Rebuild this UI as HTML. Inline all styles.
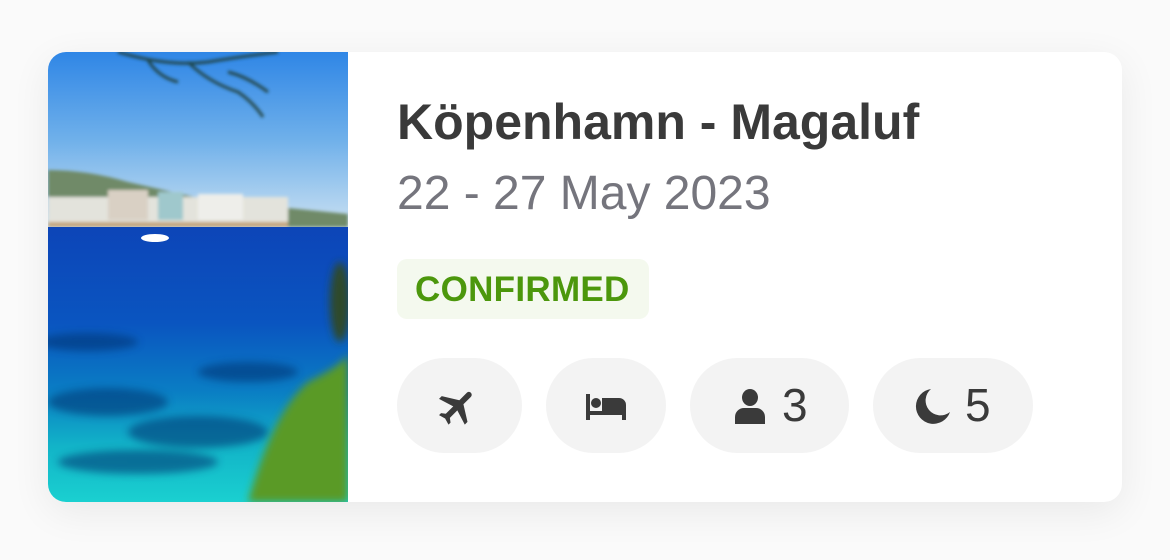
<!DOCTYPE html>
<html><head><meta charset="utf-8"><style>
html,body{margin:0;padding:0;width:1170px;height:560px;background:#fafafa;overflow:hidden;font-family:"Liberation Sans",sans-serif;}
.card{position:absolute;left:48px;top:52px;width:1074px;height:450px;background:#fff;border-radius:18px;box-shadow:0 10px 40px rgba(0,0,0,0.07);overflow:hidden;}
.img{position:absolute;left:0;top:0;width:300px;height:450px;overflow:hidden;}
.t{position:absolute;white-space:nowrap;}
.title{left:349px;top:40px;font-size:50px;line-height:60px;font-weight:bold;color:#3a3a3a;}
.date{left:349px;top:112px;font-size:48px;line-height:60px;color:#75757d;}
.badge{position:absolute;left:349px;top:207px;width:252px;height:60px;border-radius:10px;background:#f4f9ee;}
.badge span{position:absolute;left:18px;top:11px;font-size:35px;line-height:40px;font-weight:bold;color:#4c970c;letter-spacing:0.3px;}
.pill{position:absolute;top:306px;height:95px;border-radius:48px;background:#f3f3f3;}
.pill svg{position:absolute;}
.pill .n{position:absolute;font-size:46px;line-height:50px;color:#3a3a3a;top:22px;}
</style></head><body>
<div class="card">
 <div class="img">
  <svg width="300" height="450" viewBox="0 0 300 450">
   <defs>
    <linearGradient id="sky" x1="0" y1="0" x2="0" y2="1">
     <stop offset="0" stop-color="#2f86e6"/><stop offset="0.5" stop-color="#6fb0ea"/><stop offset="1" stop-color="#c9e0f2"/>
    </linearGradient>
    <linearGradient id="sea" x1="0" y1="0" x2="0" y2="1">
     <stop offset="0" stop-color="#0d45b8"/><stop offset="0.35" stop-color="#0a55c0"/><stop offset="0.6" stop-color="#0a7ec4"/><stop offset="0.8" stop-color="#12b4c8"/><stop offset="1" stop-color="#1ad0d0"/>
    </linearGradient>
    <filter id="b"><feGaussianBlur stdDeviation="4"/></filter>
    <filter id="b2"><feGaussianBlur stdDeviation="1.5"/></filter>
   </defs>
   <rect width="300" height="175" fill="url(#sky)"/>
   <g filter="url(#b2)">
   <path d="M0 118 Q40 118 80 130 L160 148 L300 162 L300 175 L0 175Z" fill="#6f8a68"/>
   <rect x="0" y="145" width="240" height="25" fill="#e3e3dc"/>
   <rect x="60" y="138" width="40" height="30" fill="#d9d0c4"/>
   <rect x="110" y="140" width="25" height="28" fill="#9fc8cc"/>
   <rect x="150" y="142" width="45" height="26" fill="#eeeeea"/>
   <rect x="0" y="170" width="240" height="5" fill="#c4a57a"/>
   </g>
   <rect x="0" y="175" width="300" height="275" fill="url(#sea)"/>
   <g filter="url(#b)" opacity="0.55" fill="#06306f">
    <ellipse cx="60" cy="350" rx="60" ry="14"/><ellipse cx="150" cy="380" rx="70" ry="16"/><ellipse cx="90" cy="410" rx="80" ry="12"/><ellipse cx="200" cy="320" rx="50" ry="10"/><ellipse cx="40" cy="290" rx="50" ry="9"/>
   </g>
   <ellipse cx="107" cy="186" rx="14" ry="4" fill="#fff"/>
   <g filter="url(#b)" fill="#5a9a28">
    <path d="M200 450 Q225 360 260 330 Q300 310 300 300 L300 450Z"/>
    <ellipse cx="292" cy="250" rx="10" ry="40" fill="#2e4a2a"/>
   </g>
   <g filter="url(#b2)" stroke="#1f3a30" stroke-width="3" fill="none" opacity="0.85">
    <path d="M70 0 Q120 15 160 10 Q190 5 230 0"/><path d="M140 10 Q160 30 190 40 Q205 50 215 65"/><path d="M180 20 Q200 25 220 40"/><path d="M100 8 Q110 25 130 30"/>
   </g>
  </svg>
 </div>
 <div class="t title">Köpenhamn - Magaluf</div>
 <div class="t date">22 - 27 May 2023</div>
 <div class="badge"><span>CONFIRMED</span></div>

 <div class="pill" style="left:349px;width:125px;">
  <svg style="left:38px;top:26px" width="46" height="46" viewBox="0 0 24 24"><path fill="#3a3a3a" transform="rotate(45 12 12)" d="M21 16v-2l-8-5V3.5c0-.83-.67-1.5-1.5-1.5S10 2.67 10 3.5V9l-8 5v2l8-2.5V19l-2 1.5V22l3.5-1 3.5 1v-1.5L13 19v-5.5l8 2.5z"/></svg>
 </div>
 <div class="pill" style="left:498px;width:120px;">
  <svg style="left:40px;top:36px" width="40" height="26" viewBox="0 0 40 26"><rect x="0" y="0" width="4" height="26" fill="#3a3a3a"/><circle cx="10" cy="9" r="5" fill="#3a3a3a"/><path d="M16 4h17a7 7 0 0 1 7 7v15h-4v-5H4v-4h12z" fill="#3a3a3a"/></svg>
 </div>
 <div class="pill" style="left:642px;width:159px;">
  <svg style="left:45px;top:31px" width="30" height="35" viewBox="0 0 30 35"><ellipse cx="15" cy="8.5" rx="8" ry="8.5" fill="#3a3a3a"/><path d="M0 35v-7a9 9 0 0 1 9-9h12a9 9 0 0 1 9 9v7z" fill="#3a3a3a"/></svg>
  <span class="n" style="left:92px">3</span>
 </div>
 <div class="pill" style="left:825px;width:160px;">
  <svg style="left:42px;top:31px" width="36" height="35" viewBox="0 0 36 35"><path d="M16 0A17.5 17.5 0 1 0 35 23 14 14 0 0 1 16 0z" fill="#3a3a3a"/></svg>
  <span class="n" style="left:92px">5</span>
 </div>
</div>
</body></html>
